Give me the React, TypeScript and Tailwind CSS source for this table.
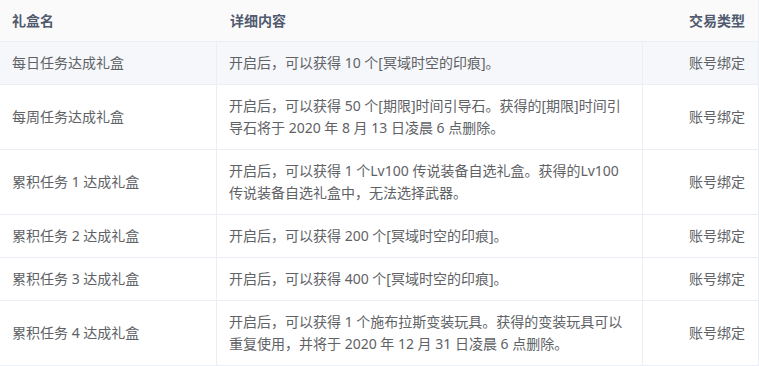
import React from "react";

type Row = { name: string; detail: string[]; type: string };

const rows: Row[] = [
  { name: "每日任务达成礼盒", detail: ["开启后，可以获得 10 个[冥域时空的印痕]。"], type: "账号绑定" },
  {
    name: "每周任务达成礼盒",
    detail: ["开启后，可以获得 50 个[期限]时间引导石。获得的[期限]时间引", "导石将于 2020 年 8 月 13 日凌晨 6 点删除。"],
    type: "账号绑定",
  },
  {
    name: "累积任务 1 达成礼盒",
    detail: ["开启后，可以获得 1 个Lv100 传说装备自选礼盒。获得的Lv100", "传说装备自选礼盒中，无法选择武器。"],
    type: "账号绑定",
  },
  { name: "累积任务 2 达成礼盒", detail: ["开启后，可以获得 200 个[冥域时空的印痕]。"], type: "账号绑定" },
  { name: "累积任务 3 达成礼盒", detail: ["开启后，可以获得 400 个[冥域时空的印痕]。"], type: "账号绑定" },
  {
    name: "累积任务 4 达成礼盒",
    detail: ["开启后，可以获得 1 个施布拉斯变装玩具。获得的变装玩具可以", "重复使用，并将于 2020 年 12 月 31 日凌晨 6 点删除。"],
    type: "账号绑定",
  },
];

export default function App() {
  return (
    <div
      className="w-[759px] h-[366px] bg-white text-[14px] text-[#606266]"
      style={{ fontFamily: '"Noto Sans", "Noto Sans CJK SC", sans-serif' }}
    >
      <div className="w-[759px] border-r border-[#ebeef5]">
        <div className="flex h-[42px] bg-[#fafafa] border-b border-[#ebeef5] font-bold text-[#515a6e]">
          <div className="w-[217px] pl-[12px] flex items-center">礼盒名</div>
          <div className="w-[426px] pl-[13px] flex items-center">详细内容</div>
          <div className="flex-1 pr-[13px] flex items-center justify-end">交易类型</div>
        </div>
        {rows.map((r, i) => (
          <div
            key={i}
            className={`flex border-b border-[#ebeef5] ${i === 0 ? "bg-[#f5f7fa]" : "bg-white"}`}
          >
            <div className="w-[217px] border-r border-[#ebeef5] pl-[12px] py-[10px] leading-[22px] flex items-center whitespace-nowrap">
              {r.name}
            </div>
            <div className="w-[426px] border-r border-[#ebeef5] pl-[12px] py-[10px] leading-[22px] flex flex-col justify-center">
              {r.detail.map((d, j) => (
                <span key={j} className="block whitespace-nowrap">
                  {d}
                </span>
              ))}
            </div>
            <div className="flex-1 pr-[13px] py-[10px] leading-[22px] flex items-center justify-end whitespace-nowrap">
              {r.type}
            </div>
          </div>
        ))}
      </div>
    </div>
  );
}
